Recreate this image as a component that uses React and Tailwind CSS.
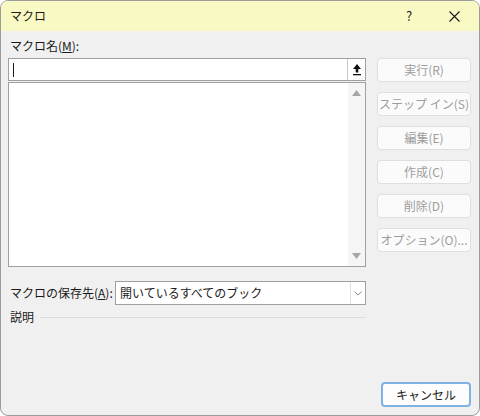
// App.jsx — Excel "マクロ" dialog

const font = { fontFamily: '"Noto Sans CJK JP", "Noto Sans", sans-serif' };

function SideButton({ children, primary }) {
  return (
    <button
      className={
        primary
          ? 'h-[25px] w-[90px] rounded-[4px] border-2 border-[#7fb1e3] bg-[#fdfdfd] text-[12px] text-[#1a1a1a]'
          : 'h-[24px] w-[94px] rounded-[4px] border border-[#dedede] bg-[#fbfbfb] text-[12px] text-[#9d9d9d]'
      }
    >
      {children}
    </button>
  );
}

function Triangle({ up }) {
  return (
    <svg width="9" height="6" viewBox="0 0 9 6">
      <path d={up ? 'M4.5 0L9 6H0Z' : 'M0 0H9L4.5 6Z'} fill="#a6a6a6" />
    </svg>
  );
}

export default function App() {
  return (
    <div
      className="flex h-[416px] w-[480px] flex-col overflow-hidden rounded-[8px] border border-[#9c9c9c] bg-[#f0f0f0] text-[12px] text-[#1a1a1a]"
      style={font}
    >
      {/* title bar */}
      <div className="flex h-[30px] shrink-0 items-center bg-[#f9f9c3] pl-[9px]">
        <span className="flex-1 text-[12px]">マクロ</span>
        <span className="w-[20px] text-center text-[13px]">?</span>
        <div className="flex w-[60px] justify-center pl-[10px]">
          <svg width="11" height="11" viewBox="0 0 11 11">
            <path d="M0.5 0.5L10.5 10.5M10.5 0.5L0.5 10.5" stroke="#1a1a1a" strokeWidth="1.1" />
          </svg>
        </div>
      </div>

      <div className="flex flex-1 pl-[7px] pr-[8px]">
        {/* left column */}
        <div className="flex w-[359px] flex-col">
          <div className="pl-[2px] pt-[7px] leading-[16px]">
            マクロ名(<span className="underline">M</span>):
          </div>
          <div className="mt-[4px] flex h-[23px] items-center border border-[#a0a0a0] bg-white">
            <div className="ml-[4px] h-[14px] w-px bg-[#1a1a1a]" />
            <div className="flex-1" />
            <div className="flex h-[21px] w-[18px] items-center justify-center border-l border-[#c8c8c8]">
              <svg width="10" height="13" viewBox="0 0 10 13">
                <path d="M5 1L9 6H6.3V9.5H3.7V6H1Z" fill="#111" />
                <rect x="1" y="11" width="8" height="1.3" fill="#111" />
              </svg>
            </div>
          </div>
          <div className="mt-px flex h-[185px] border border-[#a0a0a0] bg-white">
            <div className="flex-1" />
            <div className="flex w-[17px] flex-col items-center justify-between bg-[#f5f5f5] py-[7px]">
              <Triangle up />
              <Triangle />
            </div>
          </div>

          <div className="mt-[14px] flex items-center">
            <span className="w-[107px] pl-[2px]">
              マクロの保存先(<span className="underline">A</span>):
            </span>
            <div className="flex h-[24px] flex-1 items-center border border-[#a0a0a0] bg-white">
              <span className="flex-1 pl-[4px]">開いているすべてのブック</span>
              <div className="flex h-full w-[15px] items-center justify-center border-l border-[#e0e0e0]">
                <svg width="8" height="5" viewBox="0 0 8 5">
                  <path d="M0.5 0.5L4 4L7.5 0.5" stroke="#8a8a8a" fill="none" />
                </svg>
              </div>
            </div>
          </div>

          <div className="mt-[4px] flex items-center">
            <span className="pl-[2px] leading-[16px]">説明</span>
            <div className="ml-[6px] h-px flex-1 bg-[#dcdcdc]" />
          </div>
        </div>

        {/* right column */}
        <div className="ml-[11px] flex flex-1 flex-col">
          <div className="mt-[27px] flex flex-col gap-[10px]">
            <SideButton>実行(R)</SideButton>
            <SideButton>ステップ イン(S)</SideButton>
            <SideButton>編集(E)</SideButton>
            <SideButton>作成(C)</SideButton>
            <SideButton>削除(D)</SideButton>
            <SideButton>オプション(O)...</SideButton>
          </div>
          <div className="flex-1" />
          <div className="mb-[8px] flex justify-end">
            <SideButton primary>キャンセル</SideButton>
          </div>
        </div>
      </div>
    </div>
  );
}
